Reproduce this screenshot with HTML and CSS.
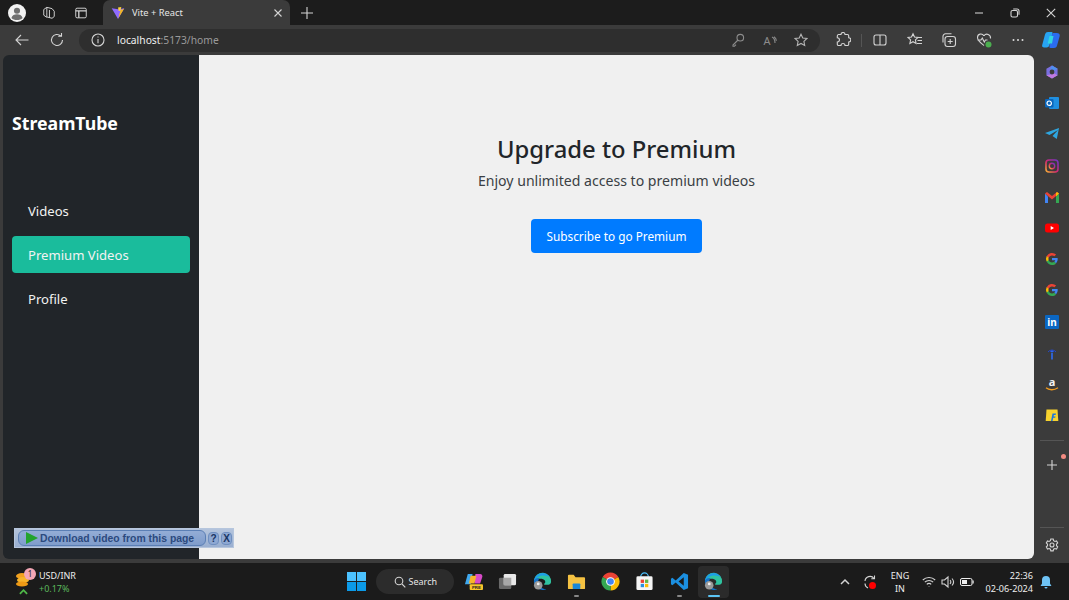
FILE: index.html
```html
<!DOCTYPE html>
<html lang="en">
<head>
<meta charset="utf-8">
<title>Vite + React</title>
<link rel="stylesheet" href="styles.css">
</head>
<body>
<div class="screen">
  <header class="tabbar">
    <span class="cell c-avatar"><svg class="i18" viewBox="0 0 20 20"><circle cx="10" cy="10" r="10" fill="#f2f2f2"/><circle cx="10" cy="7.5" r="3.4" fill="#6f6f6f"/><path d="M3.8 15.5c.8-3 3.4-4 6.2-4s5.400 1 6.200 4c-1.500 1.500-3.800 2.300-6.200 2.300s-4.700-.8-6.200-2.300z" fill="#6f6f6f"/></svg></span>
    <span class="cell c-coll"><svg class="i14 line" viewBox="0 0 16 16"><path d="M5.500 1.500l6 1.500 2.500 3v6l-2.500 2-6-1.500V7zM2 4l3.500-2.500M2 4v6.500l3.500 2.500M8.500 4.500v9"/></svg></span>
    <span class="cell c-tabs"><svg class="i14 line" viewBox="0 0 16 16"><rect x="2" y="2.500" width="12" height="11" rx="1.500"/><path d="M2 5.500h12M5.500 5.500v8" stroke-width="1.500"/></svg></span>
    <div class="tab">
      <svg class="i14" viewBox="0 0 16 16"><path d="M.8 2.500L8 14.800 15.200 2.500 8 3.800z" fill="#8f6bff"/><path d="M8.300 14.200l2.600-9.500 4-1.700z" fill="#f5b91e"/><path d="M8 1.800l3.800-.6-1 4.300-2 .3z" fill="#ffd23c"/></svg>
      <span class="tab-title">Vite + React</span>
      <svg class="i10 line" viewBox="0 0 10 10"><path d="M1.500 1.500l7 7M8.500 1.500l-7 7"/></svg>
    </div>
    <span class="cell c-plus"><svg class="i14 line" viewBox="0 0 14 14"><path d="M7 1v12M1 7h12"/></svg></span>
    <span class="grow"></span>
    <span class="cell c-win"><svg class="i10 line" viewBox="0 0 10 10"><path d="M1 5h8" stroke="#ccc"/></svg></span>
    <span class="cell c-win"><svg class="i10 line" viewBox="0 0 10 10"><rect x="1" y="2.500" width="6.500" height="6.500" rx="1.500"/><path d="M3.200 1h3.800A2 2 0 0 1 9 3v3.800"/></svg></span>
    <span class="cell c-win"><svg class="i10 line" viewBox="0 0 10 10"><path d="M.8.800l8.400 8.400M9.200.800L.8 9.200"/></svg></span>
  </header>

  <div class="toolbar">
    <span class="cell c-nav"><svg class="i16 line" viewBox="0 0 16 16"><path d="M14.500 8H2M7 3L2 8l5 5"/></svg></span>
    <span class="cell c-nav"><svg class="i16 line" viewBox="0 0 16 16"><path d="M13.500 8a5.500 5.500 0 1 1-1.700-4M12.500 1v3.300H9.200"/></svg></span>
    <div class="urlbar">
      <svg class="i14 line" viewBox="0 0 14 14"><circle cx="7" cy="7" r="6"/><path d="M7 6v4.200M7 3.600v1"/></svg>
      <span class="url"><b>localhost</b>:5173/home</span>
      <span class="grow"></span>
      <span class="cell c-in"><svg class="i14 line dim" viewBox="0 0 14 14"><circle cx="9.300" cy="4.700" r="3.300"/><path d="M7 7L2 12v1.200h1.500L5 11.700"/></svg></span>
      <span class="cell c-in"><span class="aa">A</span><svg class="i6 line dim" viewBox="0 0 6 8"><path d="M1 1c2 1 3 3 3 6M3 .8c1.500 1 2.300 2.500 2.400 4"/></svg></span>
      <span class="cell c-in last"><svg class="i14 line soft" viewBox="0 0 14 14"><path d="M7 1.200l1.800 3.800 4.100.5-3 2.900.8 4.100L7 10.500l-3.700 2 .8-4.100-3-2.900 4.100-.5z"/></svg></span>
    </div>
    <span class="cell c-tool ext"><svg class="i16 line" viewBox="0 0 16 16"><path d="M6 2.500a2 2 0 0 1 4 0h2.500a1.200 1.200 0 0 1 1.200 1.200v2a2 2 0 0 1 0 4.300v2.300a1.200 1.200 0 0 1-1.200 1.200H10a2 2 0 0 0-4 0H3.500a1.200 1.200 0 0 1-1.200-1.200V10a2 2 0 0 0 0-4.300V4A1.500 1.500 0 0 1 3.500 2.500z"/></svg></span>
    <span class="vsep"></span>
    <span class="cell c-tool"><svg class="i14 line" viewBox="0 0 14 14"><rect x="1" y="2" width="12" height="10" rx="2"/><path d="M7 2v10"/></svg></span>
    <span class="cell c-tool"><svg class="i16 line" viewBox="0 0 16 16"><path d="M6 1.800l1.500 3.300 3.500.4-2.600 2.400.7 3.500L6 9.700l-3.100 1.700.7-3.500L1 5.500l3.500-.4zM11 5.500h4M10.500 8.500H15M10 11.500h5"/></svg></span>
    <span class="cell c-tool"><svg class="i16 line" viewBox="0 0 16 16"><rect x="4" y="4.500" width="10.500" height="10" rx="2.500"/><path d="M2 10.500V4.300A2.500 2.500 0 0 1 4.500 1.800h6M9.200 7v5M6.700 9.500h5"/></svg></span>
    <span class="cell c-tool"><svg class="i16" viewBox="0 0 16 16"><path class="stroke" d="M8 3.800C6 .8 1.500 1.800 1.500 5.500c0 3.500 4 6 6.500 8M14.500 6.500C15 2.200 10 .8 8 3.800M1.500 8H5l1.300-2 2 4 1.200-2h2"/><circle cx="12.500" cy="12.500" r="3" fill="#4caf50"/></svg></span>
    <span class="cell c-tool"><svg class="i14" viewBox="0 0 14 14"><circle cx="2.500" cy="7" r="1" fill="#ddd"/><circle cx="7" cy="7" r="1" fill="#ddd"/><circle cx="11.500" cy="7" r="1" fill="#ddd"/></svg></span>
    <span class="cell c-copilot"><svg class="i20" viewBox="0 0 20 20"><path d="M7 2h3.500c1 0 1.200.6 1 1.400L8.500 15c-.4 1.500-1.300 2.500-3 2.500H3.200C1.500 17.500.7 16.500 1.200 15L4 4.500C4.500 2.800 5.500 2 7 2z" fill="#27a4f2"/><path d="M12 3h3.700c2 0 3.500 1.200 3 3l-2.700 9.800c-.4 1.500-1.500 2.200-3 2.200H9.500c-1 0-1.200-.6-1-1.400L11 5c.2-1 .5-2 1-2z" fill="#2b6cf0"/><path d="M8.500 6h4l-1.500 7.500h-4.300z" fill="#31d6e0"/></svg></span>
  </div>

  <div class="middle">
    <aside class="sidebar">
      <div class="brand">StreamTube</div>
      <nav class="nav">
        <a class="nav-item">Videos</a>
        <a class="nav-item current">Premium Videos</a>
        <a class="nav-item">Profile</a>
      </nav>
    </aside>
    <main class="main">
      <h1 class="title">Upgrade to Premium</h1>
      <p class="lead">Enjoy unlimited access to premium videos</p>
      <button class="cta">Subscribe to go Premium</button>
    </main>
    <aside class="rail">
      <svg class="i14" viewBox="0 0 14 14"><path d="M7 .5l5.600 3.200v6.600L7 13.500 1.400 10.300V3.700z" fill="#7a6fe0"/><path d="M7 .5l5.600 3.200-3.400 2L5 4z" fill="#4f8ff0"/><path d="M1.400 10.300L7 13.500l5.600-3.200-3.400-1.700-4 1z" fill="#c07ae0"/><circle cx="7" cy="7" r="2.400" fill="#3b3b3b"/></svg>
      <svg class="i14" viewBox="0 0 14 14"><rect x="4" y="1" width="10" height="12" rx="1" fill="#1f8fe0"/><rect y="3" width="8.500" height="8.500" rx="1" fill="#0a64b8"/><circle cx="4.200" cy="7.200" r="2.200" fill="none" stroke="#fff" stroke-width="1.200"/></svg>
      <svg class="i14" viewBox="0 0 14 14"><path d="M0 6L14 1 11.800 12 7.500 9 13 3 4.500 8z" fill="#2ea6e0"/></svg>
      <svg class="i14" viewBox="0 0 14 14"><defs><linearGradient id="ig" x1="0" y1="1" x2="1" y2="0"><stop offset="0" stop-color="#f9b233"/><stop offset=".45" stop-color="#d6296f"/><stop offset="1" stop-color="#6d35c9"/></linearGradient></defs><rect x="1" y="1" width="12" height="12" rx="3" fill="none" stroke="url(#ig)" stroke-width="1.600"/><circle cx="7" cy="7" r="2.700" fill="none" stroke="url(#ig)" stroke-width="1.400"/></svg>
      <svg class="i14" viewBox="0 0 14 14"><path d="M0 3.500V13h3V6.500z" fill="#4285f4"/><path d="M14 3.500V13h-3V6.500z" fill="#34a853"/><path d="M0 3.500L2 2l5 4 5-4 2 1.500L7 9.500z" fill="#ea4335"/><path d="M11 6.500L14 3.500 12 2 11 3z" fill="#fbbc05"/></svg>
      <svg class="i14" viewBox="0 0 14 14"><rect y="2.500" width="14" height="9" rx="2.500" fill="#f00"/><path d="M5.700 5v4L9 7z" fill="#fff"/></svg>
      <svg class="i14" viewBox="0 0 14 14"><path d="M12.500 6H7v2.200h3.300a3.500 3.500 0 0 1-1.100 1.600l1.800 1.500c1.100-1 1.700-2.500 1.700-4.200 0-.4 0-.8-.2-1.100z" fill="#4285f4"/><path d="M7 13c1.700 0 3-.6 4-1.600L9.200 9.800c-.5.400-1.300.7-2.200.7-1.600 0-3-1.100-3.400-2.500H1.700v1.600A6 6 0 0 0 7 13z" fill="#34a853"/><path d="M3.600 8a3.700 3.700 0 0 1 0-2.200V4.100H1.700a6 6 0 0 0 0 5.400z" fill="#fbbc05"/><path d="M7 3.400c1 0 1.800.3 2.400.9l1.700-1.700A6 6 0 0 0 1.700 4.200l1.900 1.600C4 4.500 5.400 3.400 7 3.400z" fill="#ea4335"/></svg>
      <svg class="i14" viewBox="0 0 14 14"><path d="M12.500 6H7v2.200h3.300a3.500 3.500 0 0 1-1.100 1.600l1.800 1.500c1.100-1 1.700-2.500 1.700-4.200 0-.4 0-.8-.2-1.100z" fill="#4285f4"/><path d="M7 13c1.700 0 3-.6 4-1.600L9.200 9.800c-.5.400-1.300.7-2.200.7-1.600 0-3-1.100-3.400-2.500H1.700v1.600A6 6 0 0 0 7 13z" fill="#34a853"/><path d="M3.600 8a3.700 3.700 0 0 1 0-2.200V4.100H1.700a6 6 0 0 0 0 5.400z" fill="#fbbc05"/><path d="M7 3.400c1 0 1.800.3 2.400.9l1.700-1.700A6 6 0 0 0 1.700 4.200l1.900 1.600C4 4.500 5.400 3.400 7 3.400z" fill="#ea4335"/></svg>
      <span class="glyph li">in</span>
      <svg class="i14" viewBox="0 0 14 14"><path d="M3 6a5 5 0 0 1 8 0M5 5.800a2.800 2.800 0 0 1 4 0" fill="none" stroke="#2448c8" stroke-width="1"/><circle cx="7" cy="5.500" r="1" fill="#2f6cf0"/><rect x="6.200" y="7" width="1.600" height="6.500" fill="#2f6cf0"/></svg>
      <span class="glyph amz">a<svg class="smile" viewBox="0 0 14 4"><path d="M1 .8c3 2.500 8 2.700 12 0" fill="none" stroke="#f29c1f" stroke-width="1.300"/></svg></span>
      <svg class="i14" viewBox="0 0 14 14"><path d="M1.500 1.500h11l.8 11.500H.7z" fill="#f7d22e"/><path d="M7.500 5.500H11l-.4 1.500H8.900l-.3 1.400h2l-.4 1.300H8.300L7.500 13H6z" fill="#1976e0"/></svg>
      <span class="rail-sep"></span>
      <span class="rail-add"><svg class="i12 line" viewBox="0 0 12 12"><path d="M6 1v10M1 6h10"/></svg><i class="dot"></i></span>
      <span class="grow"></span>
      <span class="rail-sep low"></span>
      <svg class="i14 line gear" viewBox="0 0 14 14"><circle cx="7" cy="7" r="2"/><path d="M5.800 1h2.400l.4 1.700 1.300.7 1.600-.5 1.200 2.100-1.200 1.200v1.500l1.200 1.200-1.200 2.100-1.600-.5-1.300.7-.4 1.700H5.800l-.4-1.700-1.300-.7-1.600.5-1.200-2.100 1.200-1.200V6.200L1.300 5l1.200-2.100 1.600.5 1.300-.7z"/></svg>
    </aside>
    <div class="dl-bar">
      <div class="dl-pill"><svg class="i12" viewBox="0 0 12 12"><path d="M0 0l12 6-12 6z" fill="#23a32d"/></svg><span>Download video from this page</span></div>
      <span class="dl-btn">?</span>
      <span class="dl-btn">X</span>
    </div>
  </div>

  <footer class="taskbar">
    <div class="weather">
      <span class="coin"><svg class="i20" viewBox="0 0 20 20"><ellipse cx="8" cy="6" rx="6" ry="3" fill="#f2a11f"/><ellipse cx="9" cy="10" rx="6" ry="3" fill="#f7b32b"/><ellipse cx="8" cy="14" rx="6" ry="2.500" fill="#ee9a15"/></svg><i class="badge">1</i><svg class="up" viewBox="0 0 10 6"><path d="M1 5l4-4 4 4" fill="none" stroke="#4fb848" stroke-width="2"/></svg></span>
      <span class="w-text"><span>USD/INR</span><span class="green">+0.17%</span></span>
    </div>
    <div class="apps">
      <span class="app"><svg class="i20" viewBox="0 0 20 20"><rect width="9.500" height="9.500" fill="#4cc2ff"/><rect x="10.500" width="9.500" height="9.500" fill="#4cc2ff"/><rect y="10.500" width="9.500" height="9.500" fill="#0b9ae8"/><rect x="10.500" y="10.500" width="9.500" height="9.500" fill="#0b9ae8"/></svg></span>
      <span class="search"><svg class="i12 line" viewBox="0 0 12 12"><circle cx="5" cy="5" r="3.800"/><path d="M8 8l3.300 3.300"/></svg>Search</span>
      <span class="app"><svg class="i20" viewBox="0 0 20 20"><path d="M4 2h5L7 13H1z" fill="#3fa9f0"/><path d="M12 2h5c2 0 3 2 2 4l-2 6h-6z" fill="#d84ac8"/><path d="M7 4h6l-2 8H5z" fill="#f7b52b"/><rect x="6" y="13" width="14" height="6" rx="1" fill="#f7c52b"/><text x="13" y="18" class="pre">PRE</text></svg></span>
      <span class="app"><svg class="i20" viewBox="0 0 20 20"><rect x="1" y="6" width="13" height="12" rx="1.500" fill="#6a6a6a"/><rect x="6" y="2" width="13" height="12" rx="1.500" fill="#e8e8e8"/><rect x="6" y="6" width="8" height="8" fill="#a8a8a8"/></svg></span>
      <span class="app"><svg class="i20" viewBox="0 0 20 20"><path d="M1 9a9 9 0 0 1 18 1.500c0 2-2 3-4.500 3-1.500 0-3-.4-3-1 1.500-.5 1.800-2 1-3.500C11 7 8 6.500 5.500 7.500 3.500 8.300 1.500 9 1 9z" fill="#2fc3a0"/><path d="M1 9c.5-4 4-8 9-8 3 0 6 1.500 8 4.500C15 3.500 8 2.500 4.500 6 3 7.500 2.500 9 3 11z" fill="#1d9ee8"/><path d="M1 9c1-2 3.500-3 6-2.500C5 8 5 12 7.500 15c1.500 2 4 3 6.500 3-1 .7-2.500 1-4 1a9 9 0 0 1-9-10z" fill="#1572c8"/><circle cx="5.500" cy="14" r="4.500" fill="#9a9a9a"/><circle cx="5.500" cy="12.500" r="1.500" fill="#eee"/></svg></span>
      <span class="app pinned"><svg class="i20" viewBox="0 0 20 20"><path d="M1 4a1 1 0 0 1 1-1h5l2 2.500h9a1 1 0 0 1 1 1V17a1 1 0 0 1-1 1H2a1 1 0 0 1-1-1z" fill="#f5c242"/><rect x="6" y="12" width="8" height="6" rx="1" fill="#1a87d8"/></svg></span>
      <span class="app"><svg class="i20" viewBox="0 0 20 20"><path d="M10 10L1.770 5.250A9.500 9.500 0 0 1 18.230 5.250z" fill="#ea4335"/><path d="M10 10l8.230-4.750A9.500 9.500 0 0 1 10 19.500z" fill="#fbbc05"/><path d="M10 10v9.500A9.500 9.500 0 0 1 1.770 5.250z" fill="#34a853"/><circle cx="10" cy="10" r="4.600" fill="#fff"/><circle cx="10" cy="10" r="3.500" fill="#4285f4"/></svg></span>
      <span class="app"><svg class="i20" viewBox="0 0 20 20"><path d="M6 5a4 4 0 0 1 8 0" fill="none" stroke="#4cc2ff" stroke-width="1.300"/><rect x="1.500" y="4.500" width="17" height="14.500" rx="1.500" fill="#f5f5f5"/><rect x="6" y="8" width="3.500" height="3.500" fill="#ea4335"/><rect x="10.500" y="8" width="3.500" height="3.500" fill="#5fb548"/><rect x="6" y="12.500" width="3.500" height="3.500" fill="#2a8fe0"/><rect x="10.500" y="12.500" width="3.500" height="3.500" fill="#fbbc05"/></svg></span>
      <span class="app pinned"><svg class="i20" viewBox="0 0 20 20"><path d="M14.500 1L19 3v14l-4.500 2L6 11l-3.500 3L1 13V7l1.500-1L6 9z" fill="#1b8fe0"/><path d="M14.500 5.500L9 10l5.500 4.500z" fill="#1a1a1a"/></svg></span>
      <span class="app running"><svg class="i20" viewBox="0 0 20 20"><path d="M1 9a9 9 0 0 1 18 1.500c0 2-2 3-4.500 3-1.500 0-3-.4-3-1 1.500-.5 1.800-2 1-3.500C11 7 8 6.500 5.500 7.500 3.500 8.300 1.500 9 1 9z" fill="#2fc3a0"/><path d="M1 9c.5-4 4-8 9-8 3 0 6 1.500 8 4.500C15 3.500 8 2.500 4.500 6 3 7.500 2.500 9 3 11z" fill="#1d9ee8"/><path d="M1 9c1-2 3.500-3 6-2.500C5 8 5 12 7.500 15c1.500 2 4 3 6.500 3-1 .7-2.500 1-4 1a9 9 0 0 1-9-10z" fill="#1572c8"/><circle cx="5.500" cy="14" r="4.500" fill="#9a9a9a"/><circle cx="5.500" cy="12.500" r="1.500" fill="#eee"/></svg></span>
    </div>
    <span class="grow"></span>
    <div class="tray">
      <svg class="i10 line chev" viewBox="0 0 10 10"><path d="M1 7l4-4 4 4" stroke-width="1.500"/></svg>
      <span class="sync"><svg class="i16 line" viewBox="0 0 16 16"><path d="M3 7a5 5 0 0 1 9-2.500M12.500 1.500v3.300H9.300M3 9.500c0 2 1 3.500 3 4.500"/></svg><i class="sync-dot"></i></span>
      <span class="lang"><span>ENG</span><span>IN</span></span>
      <svg class="i14 line wifi" viewBox="0 0 14 14"><path d="M.8 5a9 9 0 0 1 12.400 0M2.800 7.200a6 6 0 0 1 8.400 0M4.800 9.300a3 3 0 0 1 4.400 0M7 11v.5"/></svg>
      <svg class="i14 line sound" viewBox="0 0 14 14"><path d="M1 5v4h2.500L7 12V2L3.500 5zM9 5c1 1.200 1 2.800 0 4M11 3.500c1.800 2 1.800 5 0 7"/></svg>
      <svg class="i14 batt" viewBox="0 0 14 14"><rect x=".5" y="3.500" width="11.500" height="7" rx="1.500" fill="none" stroke="#eee"/><rect x="2" y="5" width="5" height="4" fill="#eee"/><rect x="12.500" y="5.500" width="1.200" height="3" fill="#eee"/></svg>
      <span class="clock"><span>22:36</span><span>02-06-2024</span></span>
      <svg class="i14 bell" viewBox="0 0 14 14"><path d="M7 1a4 4 0 0 1 4 4v3.500l1.500 2.500h-11L3 8.500V5a4 4 0 0 1 4-4zM5.500 12h3a1.500 1.500 0 0 1-3 0z" fill="#6fc3f5"/></svg>
    </div>
  </footer>
</div>
</body>
</html>
```

FILE: styles.css
```css
* { box-sizing: border-box; }
html, body { margin: 0; height: 100%; overflow: hidden; }
body { font-family: "Noto Sans", "Open Sans", sans-serif; background: #3b3b3b; }
svg { display: block; flex: none; }
.screen { width: 1069px; height: 600px; display: flex; flex-direction: column; }
.grow { flex: 1; }
.cell { display: flex; align-items: center; justify-content: center; flex: none; height: 100%; }
.i6 { width: 6px; height: 8px; }
.i10 { width: 10px; height: 10px; }
.i12 { width: 12px; height: 12px; }
.i14 { width: 14px; height: 14px; }
.i16 { width: 16px; height: 16px; }
.i18 { width: 18px; height: 18px; }
.i20 { width: 20px; height: 20px; }
.line { fill: none; stroke: #d4d4d4; stroke-width: 1.100; }
.line.dim { stroke: #8c8c8c; }
.line.soft { stroke: #b5b5b5; }
.stroke { fill: none; stroke: #d4d4d4; stroke-width: 1.100; }

.tabbar { height: 25px; background: #1c1c1c; display: flex; align-items: stretch; }
.c-avatar { width: 34px; }
.c-coll { width: 30px; }
.c-tabs { width: 34px; }
.tab { width: 187px; margin-left: 5px; background: #3b3b3b; border-radius: 7px 7px 0 0; display: flex; align-items: center; padding: 0 7px 0 8px; gap: 7px; }
.tab-title { flex: 1; color: #e6e6e6; font-size: 9.300px; }
.c-plus { width: 34px; }
.c-win { width: 36px; }

.toolbar { height: 30px; background: #3b3b3b; display: flex; align-items: center; padding-left: 4px; }
.c-nav { width: 35px; }
.urlbar { width: 741px; height: 23px; margin-left: 5px; border-radius: 12px; background: #2e2e2e; display: flex; align-items: center; padding-left: 12px; }
.url { margin-left: 12px; font-size: 10.300px; color: #9a9a9a; }
.url b { font-weight: 400; color: #f0f0f0; }
.c-in { width: 32px; }
.c-in.last { width: 30px; margin-right: 4px; }
.aa { font-size: 11px; color: #8c8c8c; }
.c-tool { width: 34.500px; }
.ext { margin-left: 6px; width: 34px; }
.vsep { width: 1px; height: 13px; margin: 0 1px; background: #555; flex: none; }
.c-copilot { width: 30px; padding-left: 1px; }

.middle { flex: 1; display: flex; position: relative; padding-left: 3px; min-height: 0; padding-bottom: 1px; }
.sidebar { width: 196px; background: #212529; border-radius: 6px 0 0 6px; padding: 56px 9px 0 9px; color: #fff; }
.brand { font-size: 17.700px; font-weight: 700; line-height: 24px; }
.nav { margin-top: 57px; display: flex; flex-direction: column; gap: 7px; }
.nav-item { height: 37px; padding-left: 16px; display: flex; align-items: center; font-size: 13.100px; color: #f2f2f2; border-radius: 4px; }
.nav-item.current { background: #1abc9c; }
.main { width: 835px; background: #f0f0f0; border-radius: 0 6px 6px 0; display: flex; flex-direction: column; align-items: center; padding-top: 76px; }
.title { margin: 0; font-size: 23.800px; font-weight: 500; line-height: 36px; color: #212529; }
.lead { margin: 3px 0 0; font-size: 14.100px; line-height: 22px; color: #3a3f44; }
.cta { margin-top: 27px; width: 171px; height: 34px; border: 0; border-radius: 4px; background: #007bff; color: #fff; font: 400 11.800px "Noto Sans", sans-serif; }
.rail { flex: 1; display: flex; flex-direction: column; align-items: center; padding: 10px 0 7px 1px; gap: 17.200px; }
.glyph { width: 14px; height: 14px; display: block; flex: none; text-align: center; }
.li { background: #0a66c2; color: #fff; font: 700 10px/14px "Noto Sans", sans-serif; border-radius: 1px; }
.amz { position: relative; color: #f2f2f2; font: 700 11px/10px "Noto Sans", sans-serif; }
.smile { position: absolute; left: 0; top: 10px; width: 14px; height: 4px; }
.rail-sep { width: 24px; height: 1px; background: #555; flex: none; margin-top: 1px; }
.rail-sep.low { margin-top: 0; }
.rail-add { position: relative; display: block; margin-top: 1px; }
.dot { position: absolute; left: 15px; top: -5px; width: 5px; height: 5px; border-radius: 50%; background: #f28b82; }
.gear { margin-top: -7px; }
.dl-bar { position: absolute; left: 14px; top: 473px; width: 220px; height: 20px; background: linear-gradient(#b5c5dd, #98aed0); display: flex; align-items: center; padding: 0 2px 0 4px; gap: 2px; box-shadow: inset 0 0 0 1px #b6c6dd; }
.dl-pill { width: 188px; height: 16px; border: 1px solid #5b7fb5; border-radius: 6px; background: linear-gradient(#94add6, #7f9ccb); display: flex; align-items: center; gap: 2px; padding-left: 7px; font: 700 10.400px "Liberation Sans", sans-serif; color: #2c4a7e; white-space: nowrap; }
.dl-btn { width: 11px; height: 13px; border-radius: 4px; border: 1px solid #6f8fc0; background: #8ea8d2; color: #183463; font: 700 10px/11px "Liberation Sans", sans-serif; text-align: center; }

.taskbar { height: 40px; flex: none; background: #1b1b1b; border-top: 3px solid #3b3b3b; display: flex; align-items: center; position: relative; }
.weather { width: 190px; display: flex; align-items: center; padding-left: 14px; gap: 5px; flex: none; }
.coin { position: relative; display: block; height: 24px; width: 20px; }
.badge { position: absolute; left: 10px; top: -2px; width: 12px; height: 12px; border-radius: 50%; background: #f4a6b5; color: #222; font: 400 8px/12px "Noto Sans", sans-serif; text-align: center; }
.up { position: absolute; left: 5px; top: 19px; width: 9px; height: 6px; }
.w-text { display: flex; flex-direction: column; font-size: 9px; line-height: 13px; color: #eee; }
.green { color: #5cb85c; }
.apps { display: flex; align-items: center; flex: none; margin-left: 149px; }
.app { width: 34.300px; height: 32px; display: flex; align-items: center; justify-content: center; position: relative; flex: none; }
.app .i20 { width: 19px; height: 19px; }
.pre { font: 700 4.500px "Liberation Sans", sans-serif; fill: #222; text-anchor: middle; }
.search { width: 78px; height: 25px; margin: 0 2px 0 3px; border-radius: 13px; background: #2c2c2c; display: flex; align-items: center; justify-content: center; gap: 3px; font-size: 9px; color: #e6e6e6; flex: none; }
.pinned::after, .running::after { content: ""; position: absolute; bottom: 1px; left: 50%; width: 5px; height: 2px; margin-left: -2.500px; border-radius: 1px; background: #888; }
.running { background: #2b2b2b; border-radius: 4px; width: 31px; margin-left: 2px; }
.running::after { width: 12px; margin-left: -6px; background: #5cc5f5; }
.tray { display: flex; align-items: center; color: #eee; flex: none; width: 234px; padding-left: 5px; }
.chev { margin-right: 12px; }
.sync { position: relative; display: block; margin-right: 12px; }
.sync-dot { position: absolute; left: 7px; top: 8px; width: 7px; height: 7px; border-radius: 50%; background: #f00; }
.lang { display: flex; flex-direction: column; align-items: center; font-size: 9px; line-height: 13px; width: 22px; margin-right: 11px; margin-left: -1px; }
.wifi { margin-right: 5px; }
.sound { margin-right: 5px; }
.batt { margin-right: 9px; }
.clock { display: flex; flex-direction: column; align-items: flex-end; font-size: 9.100px; line-height: 13px; width: 50px; margin-right: 5px; }
.bell { margin-left: 1px; }
```
